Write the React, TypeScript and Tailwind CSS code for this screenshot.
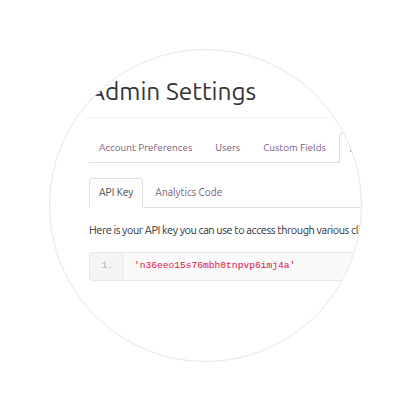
import React from "react";

export default function App() {
  const sans = { fontFamily: "Ubuntu, Lato, 'Open Sans', sans-serif" };
  const mono = { fontFamily: "'Liberation Mono', monospace" };
  return (
    <div className="w-[409px] h-[409px] bg-white pt-[49px] pl-[49px]" style={sans}>
      <div className="w-[313px] h-[313px] rounded-full border border-[#e8e6e8] overflow-hidden bg-white">
        <div className="w-[600px] pl-[39px] pt-[25px]">
          <div className="border-b border-[#f2f2f2] pb-[10px]">
            <h1 className="text-[24.5px] leading-[32px] text-[#353535] font-normal">Admin Settings</h1>
          </div>

          <div className="mt-[15px] flex items-end border-b border-[#dedede] h-[30px] text-[10px] text-[#7a5b78]">
            <div className="px-[10px] h-[29px] flex items-center">Account Preferences</div>
            <div className="ml-[3px] px-[10px] h-[29px] flex items-center">Users</div>
            <div className="ml-[3px] px-[10px] h-[29px] flex items-center">Custom Fields</div>
            <div className="ml-[3px] px-[10px] h-[30px] -mb-px flex items-center bg-white border border-[#dedede] border-b-white rounded-t-[4px] text-[#555]">API</div>
          </div>

          <div className="mt-[15px] flex items-end border-b border-[#dedede] h-[30px] text-[10.2px] text-[#7a5b78]">
            <div className="px-[9px] h-[30px] -mb-px flex items-center bg-white border border-[#dedede] border-b-white rounded-t-[4px] text-[#444]">API Key</div>
            <div className="ml-[2px] px-[10px] h-[29px] flex items-center">Analytics Code</div>
          </div>

          <p className="mt-[15px] text-[11px] leading-[14px] text-[#333] tracking-[-0.42px] whitespace-nowrap">
            Here is your API key you can use to access through various clients and applications.
          </p>

          <div className="mt-[15px] flex h-[29px] border border-[#e6e6e6] rounded-[3px] overflow-hidden bg-[#fafafa]">
            <div className="w-[34px] bg-[#f5f5f5] border-r border-[#ececec] flex items-center justify-end pr-[10px] text-[9.5px] text-[#b0b0b0]" style={mono}>
              1.
            </div>
            <div className="pl-[10px] flex items-center text-[9.6px] text-[#dd1144]" style={mono}>
              'n36eeo15s76mbh0tnpvp6imj4a'
            </div>
          </div>
        </div>
      </div>
    </div>
  );
}
